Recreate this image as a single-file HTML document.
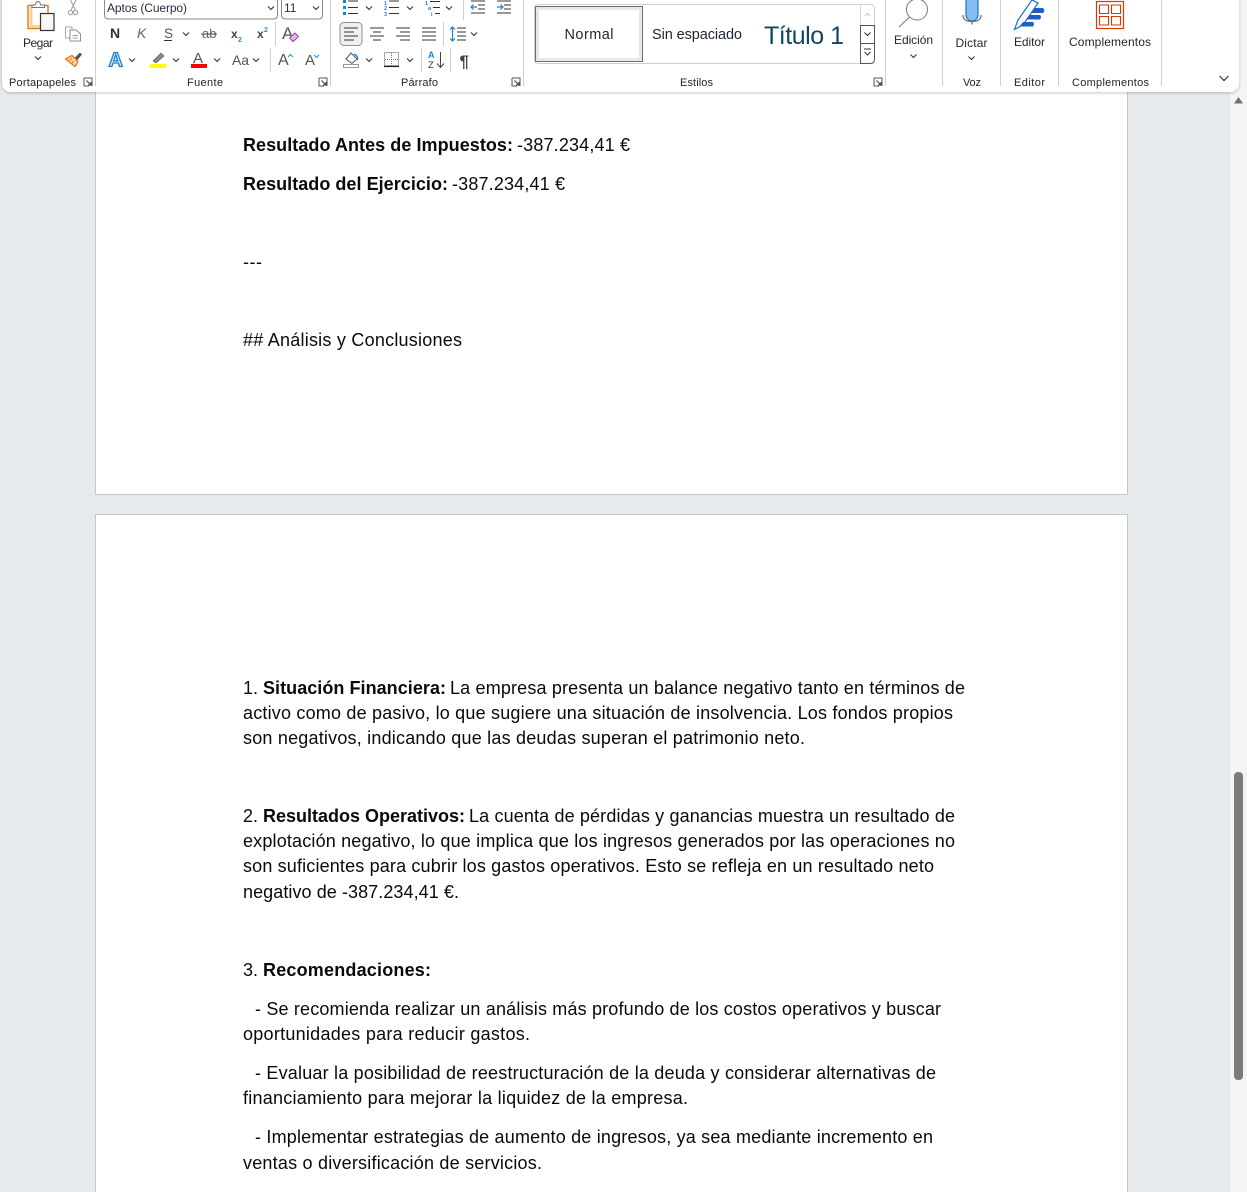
<!DOCTYPE html>
<html lang="es"><head><meta charset="utf-8"><title>Documento</title>
<style>
html,body{margin:0;padding:0;width:1247px;height:1192px;overflow:hidden;background:#e6eaed}
svg{display:block;position:absolute;left:0;top:0}
text{font-family:"Liberation Sans",sans-serif}
.d{font-size:18px;fill:#0a0a0a}
.b{font-weight:700}
.r{font-size:12px;fill:#262626;text-anchor:middle}
.g{font-size:11px;fill:#262626;text-anchor:middle}
.sep{stroke:#d0d0d0;stroke-width:1}
.ch{fill:none;stroke:#333;stroke-width:1.1}
.ln{stroke:#333;stroke-width:1.1}
</style></head><body>
<svg width="1247" height="1192" viewBox="0 0 1247 1192" xmlns="http://www.w3.org/2000/svg">
<defs>
<filter id="sh" x="-2%" y="-10%" width="104%" height="125%"><feDropShadow dx="0" dy="1" stdDeviation="1.5" flood-color="#000" flood-opacity=".22"/></filter>
<path id="chev" d="M-3-1.500 0 1.500 3-1.500" class="ch"/>
<g id="launch"><path d="M-4-4H4V4M-4-4V4H1" fill="none" stroke="#555"/><path d="M-1.500-1.500 3 3M3 0V3H0" fill="none" stroke="#333"/></g>
</defs>
<!-- scrollbar -->
<rect x="1230" y="0" width="17" height="1192" fill="#f4f4f4"/>
<rect x="1234" y="772" width="9" height="308" rx="4" fill="#7b7b7b"/>
<path d="M1234 103.500 1238.500 97 1243 103.500Z" fill="#6f6f6f"/>
<!-- pages -->
<rect x="95.500" y="-10" width="1032" height="504.500" fill="#fff" stroke="#c6c6c6"/>
<rect x="95.500" y="514.500" width="1032" height="700" fill="#fff" stroke="#c6c6c6"/>
<!-- text page 1 -->
<text class="d b" x="243" y="151" textLength="270" lengthAdjust="spacing">Resultado Antes de Impuestos:</text>
<text class="d" x="517" y="151" textLength="113" lengthAdjust="spacing">-387.234,41 €</text>
<text class="d b" x="243" y="190" textLength="205" lengthAdjust="spacing">Resultado del Ejercicio:</text>
<text class="d" x="452" y="190" textLength="113" lengthAdjust="spacing">-387.234,41 €</text>
<text class="d" x="243" y="268" textLength="19" lengthAdjust="spacing">---</text>
<text class="d" x="243" y="346" textLength="219" lengthAdjust="spacing">## Análisis y Conclusiones</text>
<!-- text page 2 -->
<text class="d" x="243" y="694">1.</text>
<text class="d b" x="263" y="694" textLength="183" lengthAdjust="spacing">Situación Financiera:</text>
<text class="d" x="450" y="694" textLength="515" lengthAdjust="spacing">La empresa presenta un balance negativo tanto en términos de</text>
<text class="d" x="243" y="719" textLength="710" lengthAdjust="spacing">activo como de pasivo, lo que sugiere una situación de insolvencia. Los fondos propios</text>
<text class="d" x="243" y="744" textLength="562" lengthAdjust="spacing">son negativos, indicando que las deudas superan el patrimonio neto.</text>
<text class="d" x="243" y="822">2.</text>
<text class="d b" x="263" y="822" textLength="202" lengthAdjust="spacing">Resultados Operativos:</text>
<text class="d" x="469" y="822" textLength="486" lengthAdjust="spacing">La cuenta de pérdidas y ganancias muestra un resultado de</text>
<text class="d" x="243" y="847" textLength="712" lengthAdjust="spacing">explotación negativo, lo que implica que los ingresos generados por las operaciones no</text>
<text class="d" x="243" y="872" textLength="691" lengthAdjust="spacing">son suficientes para cubrir los gastos operativos. Esto se refleja en un resultado neto</text>
<text class="d" x="243" y="898" textLength="216" lengthAdjust="spacing">negativo de -387.234,41 €.</text>
<text class="d" x="243" y="976">3.</text>
<text class="d b" x="263" y="976" textLength="168" lengthAdjust="spacing">Recomendaciones:</text>
<text class="d" x="255" y="1015" textLength="686" lengthAdjust="spacing">- Se recomienda realizar un análisis más profundo de los costos operativos y buscar</text>
<text class="d" x="243" y="1040" textLength="287" lengthAdjust="spacing">oportunidades para reducir gastos.</text>
<text class="d" x="255" y="1079" textLength="681" lengthAdjust="spacing">- Evaluar la posibilidad de reestructuración de la deuda y considerar alternativas de</text>
<text class="d" x="243" y="1104" textLength="445" lengthAdjust="spacing">financiamiento para mejorar la liquidez de la empresa.</text>
<text class="d" x="255" y="1143" textLength="678" lengthAdjust="spacing">- Implementar estrategias de aumento de ingresos, ya sea mediante incremento en</text>
<text class="d" x="243" y="1169" textLength="299" lengthAdjust="spacing">ventas o diversificación de servicios.</text>
<!-- ribbon -->
<rect x="2" y="-20" width="1237" height="112" rx="9" fill="#fff" filter="url(#sh)"/>
<g class="sep">
<path d="M95.500 0V86M330.500 0V86M523.500 0V86M885.500 0V86M942.500 0V86M1000.500 0V86M1058.500 0V86M1161.500 0V86"/>
<path d="M275.500 22V46M270.500 48V72M463.500 0V20M443.500 22V46M421.500 48V72M450.500 48V72"/>
</g>
<!-- clipboard -->
<rect x="28" y="5.500" width="20" height="23" fill="#fff" stroke="#e07a1f" stroke-width="1.400"/>
<path d="M29.500 7H32.500V25H47V27.500H29.500Z" fill="#fbd58f"/>
<path d="M32 7.500V5H35.500L36 2.500Q38 0.500 40 2.500L40.500 5H44.500V7.500Z" fill="#fff" stroke="#777" stroke-width="1"/>
<rect x="40.500" y="13.500" width="13.500" height="17" fill="#f7f7f7" stroke="#333" stroke-width="1.200"/>
<text class="r" x="38" y="47" textLength="30" lengthAdjust="spacing">Pegar</text>
<use href="#chev" x="38" y="58"/>
<!-- scissors -->
<path d="M70.500 0 75.500 10M76 0 71 10" fill="none" stroke="#a3a3a3" stroke-width="1.100"/>
<circle cx="70.500" cy="12.500" r="2.200" fill="none" stroke="#a3a3a3" stroke-width="1.100"/><circle cx="75.500" cy="12.500" r="2.200" fill="none" stroke="#a3a3a3" stroke-width="1.100"/>
<!-- copy -->
<path d="M65.500 27H72V38H65.500Z" fill="#fff" stroke="#a8a8a8"/>
<path d="M70 30H76L80.500 34V41H70Z" fill="#fff" stroke="#8c8c8c"/>
<path d="M72.500 35.500H78M72.500 38H78" stroke="#a0a0a0"/>
<!-- painter -->
<path d="M75 58 80 53 81.500 54.500 77 60Z" fill="#555" stroke="#444" stroke-width=".6"/>
<path d="M72 55.500 78 61.500 75 66.500 65.500 59Z" fill="#fbd9a8" stroke="#e8791c" stroke-width="1.300" stroke-linejoin="round"/>
<path d="M69 61 72 58M71 64 74 61" stroke="#e8791c"/>
<!-- font boxes -->
<path d="M104.500 0V15Q104.500 19 108.500 19H273Q277.500 19 277.500 15V0" fill="#fff" stroke="#8a8a8a"/>
<path d="M281.500 0V15Q281.500 19 285.500 19H318Q322.500 19 322.500 15V0" fill="#fff" stroke="#8a8a8a"/>
<text x="107" y="12" font-size="12" fill="#2b2b45" textLength="80" lengthAdjust="spacing">Aptos (Cuerpo)</text>
<text x="284" y="12" font-size="12" fill="#2b2b45">11</text>
<use href="#chev" x="271" y="8"/><use href="#chev" x="316" y="8"/>
<!-- font row 1 -->
<text x="110" y="38" font-size="14" font-weight="700" fill="#333">N</text>
<text x="137" y="38" font-size="14" font-style="italic" fill="#666">K</text>
<text x="164" y="38" font-size="13.500" fill="#555">S</text><path d="M164 40.500H172" stroke="#333"/>
<use href="#chev" x="186" y="34"/>
<text x="202" y="38" font-size="13" fill="#666">ab</text><path d="M201 34H217" stroke="#444"/>
<text x="231" y="38" font-size="12" font-weight="700" fill="#444">x</text><text x="238" y="42" font-size="7" font-weight="700" fill="#2f8fd6">2</text>
<text x="257" y="38" font-size="12" font-weight="700" fill="#444">x</text><text x="264" y="32" font-size="7" font-weight="700" fill="#2f8fd6">2</text>
<text x="282" y="39" font-size="17" fill="#555">A</text><path d="M289.500 38 295 33 298.500 36.500 293 41.500Z" fill="#e5b8ea" stroke="#9b3fb0"/>
<!-- font row 2 -->
<text x="108.500" y="66.500" font-size="20" font-weight="700" fill="#cfe7fa" stroke="#1f7fd0" stroke-width="1.300">A</text>
<use href="#chev" x="132" y="60"/>
<path d="M153 61 161 53 164 56 156 63Z" fill="#8a8a8a" stroke="#555" stroke-width=".6"/><rect x="150" y="64" width="16" height="4" fill="#ffff00"/>
<use href="#chev" x="176" y="60"/>
<text x="193" y="63" font-size="15" fill="#555">A</text><rect x="191" y="64" width="16" height="4" fill="#f00"/>
<use href="#chev" x="217" y="60"/>
<text x="232" y="65" font-size="14" fill="#555" textLength="17" lengthAdjust="spacing">Aa</text>
<use href="#chev" x="256" y="60"/>
<text x="278" y="65" font-size="16" fill="#555">A</text><path d="M288 57 290.500 54.500 293 57" fill="none" stroke="#2f8fd6"/>
<text x="305" y="65" font-size="15" fill="#555">A</text><path d="M314 55 316.500 57.500 319 55" fill="none" stroke="#2f8fd6"/>
<!-- group labels -->
<text class="g" x="42.500" y="86" textLength="67" lengthAdjust="spacing">Portapapeles</text>
<text class="g" x="205" y="86" textLength="36" lengthAdjust="spacing">Fuente</text>
<text class="g" x="419.500" y="86" textLength="37" lengthAdjust="spacing">Párrafo</text>
<text class="g" x="696.500" y="86" textLength="33" lengthAdjust="spacing">Estilos</text>
<text class="g" x="972" y="86" textLength="18" lengthAdjust="spacing">Voz</text>
<text class="g" x="1029.500" y="86" textLength="31" lengthAdjust="spacing">Editor</text>
<text class="g" x="1110.500" y="86" textLength="77" lengthAdjust="spacing">Complementos</text>
<use href="#launch" x="88" y="82"/><use href="#launch" x="323" y="82"/><use href="#launch" x="516" y="82"/><use href="#launch" x="878" y="82"/>
<!-- lists -->
<g class="ln"><path d="M348 1H358M348 7.500H358M348 13.500H358M389 1H399M389 7.500H399M389 13.500H399M430 1.500H440M433 7.500H440M435 13.500H440"/></g>
<path d="M343 0h3v3h-3zM343 6h3v3h-3zM343 12h3v3h-3z" fill="#1f7fd0"/>
<text x="384" y="5" font-size="5.500" font-weight="700" fill="#1f7fd0">1</text><text x="384" y="10" font-size="5.500" font-weight="700" fill="#1f7fd0">2</text><text x="384" y="16" font-size="5.500" font-weight="700" fill="#1f7fd0">3</text>
<text x="425" y="5" font-size="5.500" font-weight="700" fill="#1f7fd0">1</text><text x="428" y="10" font-size="5.500" font-weight="700" fill="#1f7fd0">a</text><text x="431" y="16" font-size="5.500" font-weight="700" fill="#1f7fd0">i</text>
<use href="#chev" x="369" y="8"/><use href="#chev" x="410" y="8"/><use href="#chev" x="449" y="8"/>
<g class="ln"><path d="M471 1H485M478 5H485M478 9H485M471 13H485M497 1H511M504 5H511M497 13H511M504 9H511"/></g>
<path d="M477 7H471M473.500 4.500 471 7 473.500 9.500M497 7H503M500.500 4.500 503 7 500.500 9.500" fill="none" stroke="#1f7fd0" stroke-width="1.200"/>
<!-- alignment -->
<rect x="340" y="22.500" width="22" height="23" rx="4" fill="#f0f0f0" stroke="#8f8f8f"/>
<g class="ln"><path d="M344 28H358M344 32H354M344 36H358M344 40H354"/>
<path d="M370 28H384M373 32H381M370 36H384M373 40H381"/>
<path d="M396 28H410M400 32H410M396 36H410M400 40H410"/>
<path d="M422 28H436M422 32H436M422 36H436M422 40H436"/>
<path d="M457 28H466M457 32H466M457 36H466M457 40H466"/></g>
<path d="M452.500 27V41M450 29.500 452.500 27 455 29.500M450 38.500 452.500 41 455 38.500" fill="none" stroke="#1f7fd0" stroke-width="1.200"/>
<use href="#chev" x="474" y="34"/>
<!-- shading, borders, sort, pilcrow -->
<path d="M346 59 351 53 357 59 352 63.500Z" fill="#fff" stroke="#555"/><path d="M354 54Q358.500 56 357.500 60" fill="none" stroke="#1f7fd0" stroke-width="1.400"/><rect x="343.500" y="64.500" width="15" height="3" fill="#fff" stroke="#999"/>
<use href="#chev" x="369" y="60"/>
<rect x="384.500" y="52.500" width="14" height="13" fill="none" stroke="#555" stroke-dasharray="1 1"/><path d="M391.500 53V66M385 59.500H398" stroke="#777" stroke-dasharray="1 1"/><path d="M384 66.500H399" stroke="#222" stroke-width="1.200"/>
<use href="#chev" x="410" y="60"/>
<text x="428" y="58" font-size="9" font-weight="700" fill="#1f7fd0">A</text><text x="428" y="68" font-size="9.500" fill="#333">Z</text>
<path d="M440.500 52V67M437 63.500 440.500 67.500 444 63.500" fill="none" stroke="#444"/>
<text x="459.500" y="67" font-size="17" font-weight="700" fill="#444">¶</text>
<!-- styles gallery -->
<rect x="534.500" y="4.500" width="340" height="59" rx="4" fill="#fff" stroke="#cfcfcf"/>
<rect x="535.500" y="6.500" width="107" height="55" fill="#fff" stroke="#6e6e6e"/>
<rect x="537.500" y="8.500" width="103" height="51" fill="none" stroke="#e8e8e8" stroke-width="3"/>
<text x="589" y="39" font-size="14.500" fill="#1c2733" text-anchor="middle" textLength="49" lengthAdjust="spacing">Normal</text>
<text x="652" y="39" font-size="14.500" fill="#1c2733" textLength="90" lengthAdjust="spacing">Sin espaciado</text>
<text x="764" y="44" font-size="25" fill="#0f4761" textLength="80" lengthAdjust="spacing">Título 1</text>
<path d="M860.500 25V5" stroke="#d8d8d8"/>
<path d="M865 16 867.500 13.500 870 16" fill="none" stroke="#c4c4c4"/>
<path d="M860.500 25.500H874.500V43.500H860.500ZM860.500 43.500H874.500V59Q874.500 63.500 870 63.500H860.500Z" fill="#fff" stroke="#555"/>
<use href="#chev" x="867.500" y="34"/>
<path d="M864 49H871M864.500 52 867.500 55 870.500 52" fill="none" stroke="#333"/>
<!-- edicion -->
<circle cx="917" cy="9.500" r="10.500" fill="none" stroke="#777" stroke-width="1"/>
<path d="M909.500 17 899 27" stroke="#777"/>
<text class="r" x="913.500" y="44" textLength="39" lengthAdjust="spacing">Edición</text>
<use href="#chev" x="913.500" y="56"/>
<!-- mic -->
<rect x="966" y="-6" width="12" height="27" rx="6" fill="#83bdee" stroke="#1f6fc5" stroke-width="1.200"/>
<path d="M963 15V16Q963.500 21.500 972 21.500Q980.500 21.500 981 16V15M972 21.500V24.500" fill="none" stroke="#666" stroke-width="1.200"/>
<text class="r" x="971.500" y="47" textLength="32" lengthAdjust="spacing">Dictar</text>
<use href="#chev" x="971.500" y="58"/>
<!-- editor icon -->
<path d="M1014.500 29.500 1018 20 1032 0 1038 3 1023 25Z" fill="#fff" stroke="#1f6fd0" stroke-width="1.200"/>
<path d="M1035 8H1043Q1045.500 10.500 1043 13H1031.500ZM1029.500 15H1040Q1042 17 1040 19.500H1026ZM1023 22H1033Q1035 24 1033 26.500H1019.500Z" fill="#1f5fc4"/>
<text class="r" x="1029.500" y="46" textLength="31" lengthAdjust="spacing">Editor</text>
<!-- complementos icon -->
<rect x="1096.500" y="1.500" width="27" height="27" fill="#fff" stroke="#d83b01" stroke-width="1.200"/>
<path d="M1099.500 5H1108.500V13.500H1099.500ZM1111.500 5H1120.500V13.500H1111.500ZM1099.500 16.500H1108.500V25H1099.500ZM1111.500 16.500H1120.500V25H1111.500Z" fill="none" stroke="#d83b01" stroke-width="1.100"/>
<text class="r" x="1110" y="46" textLength="82" lengthAdjust="spacing">Complementos</text>
<path d="M1219.500 76 1224 80.500 1228.500 76" fill="none" stroke="#333" stroke-width="1.200"/>
</svg>
</body></html>
